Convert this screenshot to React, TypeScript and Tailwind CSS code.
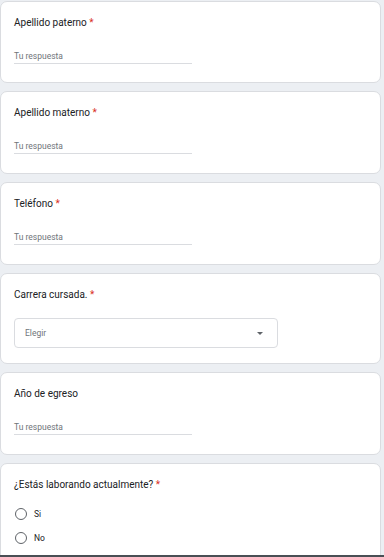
import React from "react";

const font = { fontFamily: "Roboto, 'Noto Sans', Arial, sans-serif" };

function Label({ text, required = true }: { text: string; required?: boolean }) {
  return (
    <div className="text-[10px] leading-[14px] text-[#202124]">
      {text}
      {required && <span className="text-[#d93025]"> *</span>}
    </div>
  );
}

function TextCard({ label, required = true, h }: { label: string; required?: boolean; h: string }) {
  return (
    <div className={`${h} shrink-0 rounded-[7px] border border-[#dadce0] bg-white pl-[13px] pt-[14px]`}>
      <Label text={label} required={required} />
      <div className="mt-[20px] w-[178px] border-b border-[#dadce0] pb-[1px] text-[8.5px] leading-[12px] text-[#70757a]">
        Tu respuesta
      </div>
    </div>
  );
}

function Radio({ text }: { text: string }) {
  return (
    <div className="flex h-[24px] items-center">
      <div className="ml-[1px] h-[12px] w-[12px] rounded-full border-[1.5px] border-[#5f6368]" />
      <span className="ml-[7px] text-[8.5px] text-[#202124]">{text}</span>
    </div>
  );
}

export default function App() {
  return (
    <div style={font} className="relative h-[557px] w-[384px] overflow-hidden bg-[#eceff3]">
      <div className="flex flex-col gap-[8px] pt-[1px] pr-[3px]">
        <TextCard label="Apellido paterno" h="h-[82px]" />
        <TextCard label="Apellido materno" h="h-[83px]" />
        <TextCard label="Teléfono" h="h-[83px]" />
        <div className="h-[91px] shrink-0 rounded-[7px] border border-[#dadce0] bg-white pl-[13px] pt-[14px]">
          <Label text="Carrera cursada." />
          <div className="mt-[16px] flex h-[30px] w-[264px] items-center justify-between rounded-[4px] border border-[#dadce0] pl-[10px] pr-[14px]">
            <span className="text-[8.5px] text-[#70757a]">Elegir</span>
            <svg width="6" height="3" viewBox="0 0 6 3">
              <path d="M0 0 L6 0 L3 3 Z" fill="#5f6368" />
            </svg>
          </div>
        </div>
        <TextCard label="Año de egreso" required={false} h="h-[83px]" />
        <div className="h-[100px] shrink-0 rounded-[7px] border border-[#dadce0] bg-white pl-[13px] pt-[14px]">
          <Label text="¿Estás laborando actualmente?" />
          <div className="mt-[10px] flex flex-col">
            <Radio text="Si" />
            <Radio text="No" />
          </div>
        </div>
      </div>
      <div className="absolute bottom-0 left-0 h-[2px] w-full bg-[#4a4f55]" />
    </div>
  );
}
